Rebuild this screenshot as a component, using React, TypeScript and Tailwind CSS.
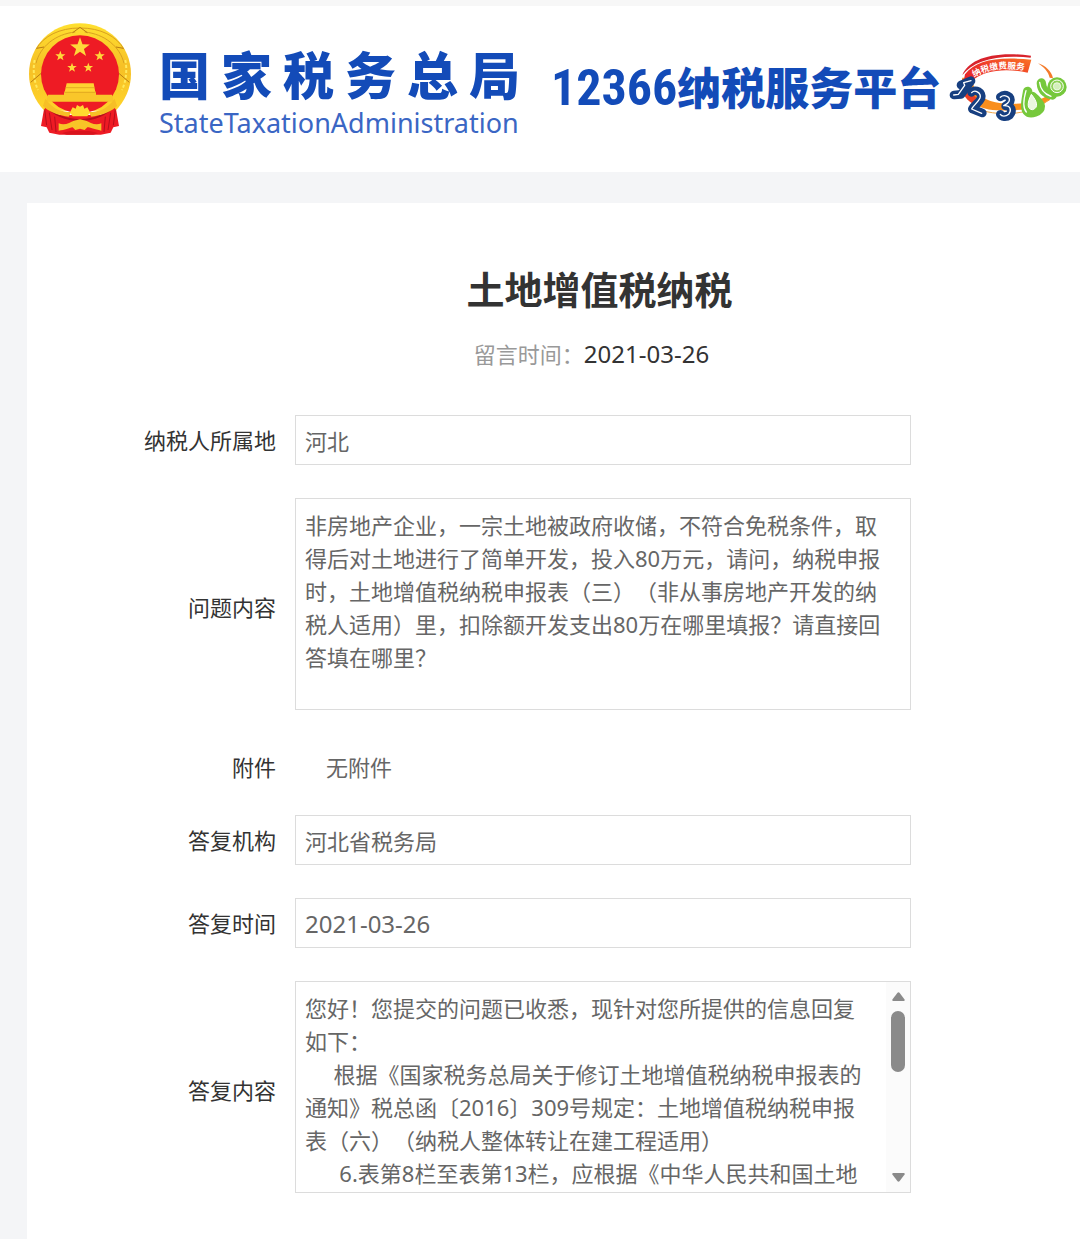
import { useState } from "react";
import type { ReactNode } from "react";

const QUESTION = `非房地产企业，一宗土地被政府收储，不符合免税条件，取
得后对土地进行了简单开发，投入80万元，请问，纳税申报
时，土地增值税纳税申报表（三）（非从事房地产开发的纳
税人适用）里，扣除额开发支出80万在哪里填报？请直接回
答填在哪里？`;

const ANSWER = `您好！您提交的问题已收悉，现针对您所提供的信息回复
如下：
     根据《国家税务总局关于修订土地增值税纳税申报表的
通知》税总函〔2016〕309号规定：土地增值税纳税申报
表（六）（纳税人整体转让在建工程适用）
      6.表第8栏至表第13栏，应根据《中华人民共和国土地`;

const STAR = "M0,-10 L2.4,-3.2 L9.5,-3.1 L3.8,1.2 L5.9,8.1 L0,4 L-5.9,8.1 L-3.8,1.2 L-9.5,-3.1 L-2.4,-3.2 Z";

function Emblem() {
  return (
    <svg viewBox="84 66 312 342" className="h-[114px] w-[104px] shrink-0" role="img" aria-label="国徽">
      <defs>
        <linearGradient id="gold" x1="0" y1="0" x2="0" y2="1">
          <stop offset="0" stopColor="#ffe030" />
          <stop offset="0.5" stopColor="#f6c026" />
          <stop offset="1" stopColor="#ffd42a" />
        </linearGradient>
      </defs>
      {/* ribbon ends */}
      <path d="M137 300 L170 345 L310 345 L343 300 L357 378 L340 382 L332 398 L302 404 L178 404 L148 398 L140 382 L123 378Z" fill="#ee1b24" />
      <path d="M240 70 C325 70 393 138 393 222 C393 266 374 304 347 332 L133 332 C106 304 87 266 87 222 C87 138 155 70 240 70Z" fill="url(#gold)" />
      <path d="M108 148 C130 108 180 84 238 84 M372 148 C350 108 300 84 242 84 M108 190 C120 140 166 102 226 96 M372 190 C360 140 314 102 254 96" fill="none" stroke="#d9a01f" strokeWidth="3" />
      <path d="M104 180 C98 210 102 244 114 270 M376 180 C382 210 378 244 366 270" fill="none" stroke="#ffe95c" strokeWidth="6" strokeDasharray="9 6" />
      <path d="M92 247 L128 216 M388 247 L352 216 M110 145 L132 141 M370 145 L348 141 M218 98 L240 82 L262 98" fill="none" stroke="#b87d14" strokeWidth="3" />
      <circle cx="240" cy="223" r="117" fill="#ee1b24" />
      <g fill="#ffd83a">
        <path d={STAR} transform="translate(240 143) scale(3.1)" />
        <path d={STAR} transform="translate(181 168) scale(1.6)" />
        <path d={STAR} transform="translate(299 168) scale(1.6)" />
        <path d={STAR} transform="translate(216 203) scale(1.5)" />
        <path d={STAR} transform="translate(265 203) scale(1.5)" />
      </g>
      <path d="M137 312 C170 350 205 362 240 362 C275 362 310 350 343 312 L350 350 L310 362 L170 362 L130 350Z" fill="#ee1b24" />
      <path d="M134 328 L140 376 M148 338 L156 390 M346 328 L340 376 M332 338 L324 390 M164 350 L168 396 M316 350 L312 396" stroke="#b50f1c" strokeWidth="3" />
      <path d="M133 314 C166 350 205 360 240 360 C275 360 314 350 347 314" fill="none" stroke="#b50f1c" strokeWidth="5" />
      {/* gate */}
      <path d="M200 250 H281 L286 276 H194Z" fill="#ffd331" />
      <path d="M192 275 H288 V284 H336 L342 305 H138 L144 284 H192Z" fill="#f9c62a" />
      <path d="M196 263 H285 M192 277 H288" stroke="#d89b1b" strokeWidth="2" />
      <path d="M136 296 C160 330 188 336 214 336 L206 350 C170 346 142 332 129 318Z M344 296 C320 330 292 336 266 336 L274 350 C310 346 338 332 351 318Z" fill="#f6bf26" />
      <path d="M210 337 L218 322 L227 326 L231 315 L240 320 L249 315 L253 326 L262 322 L270 337 L262 349 H218Z" fill="#ffd92f" />
      <path d="M176 370 C196 378 210 366 222 362 L240 358 L258 362 C270 366 284 378 304 370 V392 C284 388 270 382 262 382 L254 390 L240 386 L226 390 L218 382 C206 384 196 390 176 392Z" fill="#f8c427" />
      <path d="M186 400 C205 390 275 390 294 400 L280 404 H200Z" fill="#d9131d" />
    </svg>
  );
}

function HotlineLogo() {
  return (
    <svg viewBox="20 35 366 216" className="h-[72px] w-[122px] shrink-0" role="img" aria-label="12366">
      <defs>
        <linearGradient id="band" x1="0" y1="1" x2="1" y2="0">
          <stop offset="0" stopColor="#e5202a" />
          <stop offset="0.5" stopColor="#ef3a28" />
          <stop offset="1" stopColor="#fa7524" />
        </linearGradient>
        <path id="bandText" d="M101 111 Q165 72 262 92" />
      </defs>
      {/* swoosh */}
      <path d="M66 112 C54 160 90 205 170 210 C240 212 290 205 330 178 L318 168 C280 190 220 196 165 186 C120 176 92 150 100 112Z" fill="#f98e1d" />
      <path d="M66 116 C58 150 72 176 98 190 L108 172 C92 158 84 140 98 112Z" fill="#ee3f25" />
      <path d="M118 208 C180 230 280 222 322 180" fill="none" stroke="#f2a64a" strokeWidth="3" />
      <path d="M66 104 C84 60 150 30 272 46 L271 52 C170 41 100 61 66 104Z" fill="#d8232c" />
      <path d="M74 102 C106 60 170 48 273 58 L262 97 C190 82 130 92 97 120 L70 122Z" fill="url(#band)" />
      <text fill="#fff" fontSize="26" fontWeight="700" fontFamily="'Noto Sans CJK SC', sans-serif">
        <textPath href="#bandText">纳税缴费服务</textPath>
      </text>
      <path d="M293 69 C315 76 334 92 338 114 L328 112 C324 94 310 80 293 69Z" fill="#f47b2b" />
      {/* digits: thick stroke with a light core */}
      <g fill="none" strokeLinecap="round" strokeLinejoin="round">
        <g stroke="#173f80" strokeWidth="26">
          <path d="M92 121 L62 134 M92 122 L62 162 L41 164" />
          <path d="M94 156 C104 144 128 156 122 174 C116 188 102 194 96 206 L126 218" />
          <path d="M180 170 C194 158 216 168 209 184 C206 192 200 194 196 197 C214 196 218 212 208 224 C198 232 184 230 180 222" />
        </g>
        <g stroke="#fff" strokeWidth="4">
          <path d="M92 121 L70 127 L73 135 L54 162 L40 164" />
          <path d="M94 157 C104 146 124 158 119 173 C113 187 98 196 94 206 L124 219" />
          <path d="M180 171 C192 160 212 170 206 183 C202 191 194 193 190 196 C212 195 214 210 205 222 C196 229 184 229 180 222" />
        </g>
        <g stroke="#76c83c" strokeWidth="28">
          <path d="M262 153 C258 176 252 200 260 212 C270 224 300 214 300 198 C298 186 286 176 276 168" />
          <path d="M303 128 C304 146 314 160 336 164" />
        </g>
        <path d="M257 151 C250 176 246 202 258 215" stroke="#fff" strokeWidth="4" />
        <path d="M298 126 C300 148 310 160 332 168" stroke="#fff" strokeWidth="4" />
      </g>
      <path d="M273 162 C258 192 262 208 277 208 C296 202 290 182 273 162Z" fill="#eaf7df" stroke="#fff" strokeWidth="3" />
      <circle cx="350" cy="140" r="29" fill="#76c83c" />
      <circle cx="350" cy="138" r="19" fill="#8fd158" stroke="#fff" strokeWidth="3" />
      <circle cx="350" cy="138" r="11" fill="#d3efbb" stroke="#fff" strokeWidth="2" />
    </svg>
  );
}

function Header() {
  return (
    <header className="flex h-[172px] items-start overflow-hidden border-t-[6px] border-[#f7f7f7] bg-white pl-7 text-[#134bb8]">
      <div className="pt-4">
        <Emblem />
      </div>
      <div className="ml-[27px] w-[361px] shrink-0 pt-[42px]">
        <div className="flex gap-[11px] text-[51px] leading-[54px] font-black">
          {[..."国家税务总局"].map((c) => (
            <span key={c}>{c}</span>
          ))}
        </div>
        <div className="text-[27px] leading-[42px] text-[#3a66c4]">StateTaxationAdministration</div>
      </div>
      <div className="ml-[31px] flex shrink-0 items-center pt-[52px] leading-[60px] font-black">
        <span className="font-['Roboto_Condensed','Liberation_Sans',sans-serif] text-[50px] font-bold">12366</span>
        <span className="text-[44px]">纳税服务平台</span>
      </div>
      <div className="ml-[6px] pt-[46px]">
        <HotlineLogo />
      </div>
    </header>
  );
}

function Row({
  label,
  htmlFor,
  labelClass = "",
  children,
}: {
  label: string;
  htmlFor?: string;
  labelClass?: string;
  children: ReactNode;
}) {
  return (
    <div className="grid grid-cols-[249px_minmax(0,1fr)] items-center gap-x-[19px]">
      <label htmlFor={htmlFor} className={`text-right text-[#333] ${labelClass}`}>
        {label}
      </label>
      {children}
    </div>
  );
}

const box = "block w-full resize-none border border-[#dcdcdc] bg-white px-[9px] text-[#666] outline-none";

function TextField({ id, value, className }: { id: string; value: string; className?: string }) {
  return <input id={id} type="text" readOnly value={value} className={`${box} h-[50px] ${className ?? ""}`} />;
}

function ScrollRail() {
  return (
    <div aria-hidden="true" className="absolute inset-y-px right-px flex w-[24px] flex-col items-center bg-[#fbfbfb] py-[10px]">
      <svg viewBox="0 0 13 9" className="h-[9px] w-[13px] fill-[#8a8a8a]">
        <path d="M5.3 1 Q6.5 -0.6 7.7 1 L12.6 7.6 Q13 9 11.8 9 H1.2 Q0 9 0.4 7.6Z" />
      </svg>
      <div className="mt-[10px] h-[61px] w-[14px] rounded-full bg-[#8a8a8a]" />
      <svg viewBox="0 0 13 9" className="mt-auto h-[9px] w-[13px] fill-[#8a8a8a]">
        <path d="M5.3 8 Q6.5 9.6 7.7 8 L12.6 1.4 Q13 0 11.8 0 H1.2 Q0 0 0.4 1.4Z" />
      </svg>
    </div>
  );
}

export default function App() {
  const [answer] = useState(ANSWER);

  return (
    <div className="min-h-screen bg-[#f4f5f7] font-['Noto_Sans','Noto_Sans_CJK_SC',sans-serif] [text-spacing-trim:space-all]" lang="zh-CN">
      <Header />
      <main className="mt-[31px] ml-[27px] min-h-[1036px] bg-white pt-[60px] pb-[47px]">
        <div className="pl-[92px] text-center">
          <h1 className="text-[38px] leading-[52px] font-bold text-[#333]">土地增值税纳税</h1>
          <p className="mt-[22px] pr-4 text-[22px] leading-[34px] text-[#999]">
            留言时间：<time className="text-2xl leading-[34px] text-[#333]">2021-03-26</time>
          </p>
        </div>

        <form className="mt-[44px] flex flex-col gap-[33px] pr-[169px] text-[22px] leading-[33px]">
          <Row label="纳税人所属地" htmlFor="region">
            <TextField id="region" value="河北" />
          </Row>
          <Row label="问题内容" htmlFor="question" labelClass="pt-[6px]">
            <textarea id="question" readOnly value={QUESTION} className={`${box} h-[212px] overflow-hidden pt-[10px] whitespace-pre`} />
          </Row>
          <div className="pt-2">
            <Row label="附件">
              <span className="pl-[31px] text-[#666]">无附件</span>
            </Row>
          </div>
          <div className="-mt-[2px]">
            <Row label="答复机构" htmlFor="office">
              <TextField id="office" value="河北省税务局" />
            </Row>
          </div>
          <Row label="答复时间" htmlFor="reply-date">
            <TextField id="reply-date" value="2021-03-26" className="text-2xl" />
          </Row>
          <Row label="答复内容" htmlFor="answer" labelClass="pt-[6px]">
            <div className="relative">
              <textarea id="answer" readOnly value={answer} className={`${box} h-[212px] overflow-hidden pt-[10px] whitespace-pre`} />
              <ScrollRail />
            </div>
          </Row>
        </form>
      </main>
    </div>
  );
}
